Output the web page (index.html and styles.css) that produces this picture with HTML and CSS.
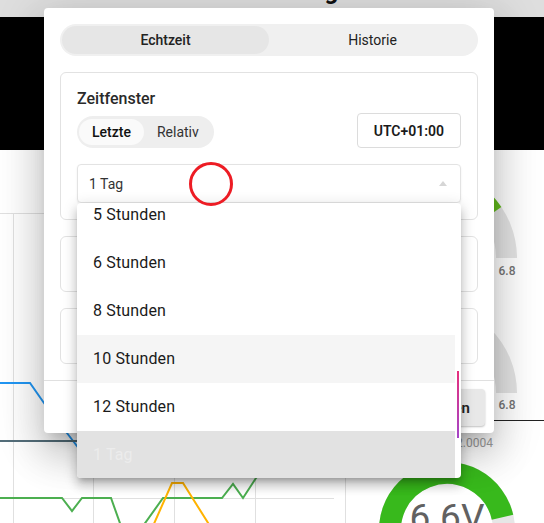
FILE: index.html
```html
<!DOCTYPE html>
<html lang="de">

<head>
  <meta charset="UTF-8">
  <meta name="viewport" content="width=device-width, initial-scale=1.0">
  <title>Zeitfenster</title>
  <link rel="stylesheet" href="styles.css">
</head>

<body>
  <header class="page-head">
    <h1 class="page-title">Messung</h1>
  </header>
  <div class="banner"></div>

  <main class="dashboard">
    <svg class="chart" width="345" height="373" viewBox="0 0 345 373">
      <g class="grid">
        <line x1="0" y1="63.5" x2="334" y2="63.5" />
        <line x1="0" y1="348.5" x2="334" y2="348.5" />
        <line x1="13.5" y1="63" x2="13.5" y2="373" />
        <line x1="93.5" y1="63" x2="93.5" y2="373" />
        <line x1="174.5" y1="63" x2="174.5" y2="373" />
        <line x1="255.5" y1="63" x2="255.5" y2="373" />
      </g>
      <polyline class="series blue" points="0,233 30,233 44,253 80,300" />
      <polyline class="series slate" points="0,291 140,291" />
      <polyline class="series green" points="0,348 62,348 72,361 82,348 111,348 121,376" />
      <polyline class="series green" points="143,376 163,348 222,348 233,334 243,348 256,328 290,290" />
      <polyline class="series orange" points="153,376 172,333 183,333 210,376" />
    </svg>

    <svg class="gauges" width="199" height="373" viewBox="0 0 199 373">
      <path class="gauge-track" d="M-10 108 A91 91 0 0 1 172 108 L151 108 A70 70 0 0 0 11 108Z" />
      <path class="gauge-value" d="M-10 108 A91 91 0 0 1 156.4 57.1 L139 68.9 A70 70 0 0 0 11 108Z" />
      <text class="gauge-label" x="162" y="125">6.8</text>

      <path class="gauge-track" d="M-10 243 A91 91 0 0 1 172 243 L151 243 A70 70 0 0 0 11 243Z" />
      <path class="gauge-value" d="M-10 243 A91 91 0 0 1 65.2 153.4 L68.8 174.1 A70 70 0 0 0 11 243Z" />
      <text class="gauge-label" x="162" y="259">6.8</text>

      <line class="axis" x1="0" y1="270.5" x2="199" y2="270.5" />
      <text class="gauge-small" x="148" y="297">2.0004</text>
      <line class="card-edge" x1="0.5" y1="290" x2="0.5" y2="373" />

      <circle class="donut-track" cx="102" cy="380" r="57" />
      <path class="donut-value" d="M52.6 408.5 A57 57 0 1 1 157.5 367.2" />
      <text class="donut-text" x="102" y="380">6.6V</text>
    </svg>
  </main>

  <div class="dialog">
    <div class="dialog-body">
      <div class="tabs">
        <button class="tab is-active">Echtzeit</button>
        <button class="tab">Historie</button>
      </div>

      <section class="card">
        <div class="card-head">
          <div>
            <h2 class="card-title">Zeitfenster</h2>
            <div class="toggle">
              <button class="toggle-btn is-active">Letzte</button>
              <button class="toggle-btn">Relativ</button>
            </div>
          </div>
          <button class="tz-btn">UTC+01:00</button>
        </div>

        <div class="select">
          <span class="select-value">1 Tag</span>
          <span class="select-arrow"></span>

          <div class="menu">
            <ul class="menu-list">
              <li>5 Stunden</li>
              <li>6 Stunden</li>
              <li>8 Stunden</li>
              <li class="is-hover">10 Stunden</li>
              <li>12 Stunden</li>
              <li class="is-selected">1 Tag</li>
            </ul>
            <div class="menu-scroll"><span class="menu-thumb"></span></div>
          </div>
        </div>
      </section>

      <section class="card card-small"></section>
      <section class="card card-small"></section>
    </div>

    <footer class="dialog-actions">
      <button class="btn">Übernehmen</button>
    </footer>
  </div>

  <span class="click-ring"></span>
</body>

</html>
```

FILE: styles.css
```css
html {
  box-sizing: border-box;
  font-family: Roboto, "Liberation Sans", sans-serif;
  font-size: 16px;
}

*,
*:before,
*:after {
  box-sizing: inherit;
}

body {
  margin: 0;
  width: 544px;
  height: 523px;
  overflow: hidden;
  position: relative;
  background: #fff;
  color: #222;
}

button {
  font: inherit;
  color: inherit;
  border: 0;
  background: none;
  cursor: pointer;
}

/* page behind the dialog */
.page-head {
  height: 17px;
  overflow: hidden;
  padding-left: 239px;
  background: #dedede;
}

.page-title {
  margin: -21px 0 0;
  font-size: 24px;
  line-height: 24px;
  font-weight: bold;
  color: #111;
}

.banner {
  height: 133px;
  background: #000;
}

.dashboard {
  display: flex;
  height: 373px;
}

.chart .grid line {
  stroke: #e0e0e0;
  stroke-width: 1;
}

.series {
  fill: none;
  stroke-width: 2;
  stroke-linejoin: miter;
}

.series.blue {
  stroke: #2196f3;
}

.series.slate {
  stroke: #546e7a;
}

.series.green {
  stroke: #4caf50;
}

.series.orange {
  stroke: #ffb300;
}

.gauge-track {
  fill: #e4e4e4;
}

.gauge-value {
  fill: #64bd1e;
}

.gauge-label {
  font-size: 12px;
  font-weight: 500;
  fill: #757575;
  text-anchor: middle;
}

.gauge-small {
  font-size: 12px;
  fill: #9e9e9e;
  text-anchor: end;
}

.axis {
  stroke: #222;
  stroke-width: 1;
}

.card-edge {
  stroke: #e0e0e0;
}

.donut-track {
  fill: none;
  stroke: #e6e6e6;
  stroke-width: 22;
}

.donut-value {
  fill: none;
  stroke: #38b91c;
  stroke-width: 22;
}

.donut-text {
  font-size: 37px;
  fill: #616161;
  text-anchor: middle;
}

/* dialog */
.dialog {
  position: absolute;
  left: 44px;
  top: 8px;
  width: 450px;
  background: #fff;
  border-radius: 4px;
  z-index: 10;
  box-shadow: 0 11px 15px -7px rgba(0, 0, 0, 0.2),
    0 24px 38px 3px rgba(0, 0, 0, 0.14),
    0 9px 46px 8px rgba(0, 0, 0, 0.12);
}

.dialog-body {
  display: flex;
  flex-direction: column;
  gap: 16px;
  padding: 16px;
}

.tabs {
  display: grid;
  grid-template-columns: 1fr 1fr;
  height: 32px;
  padding: 2px;
  border-radius: 16px;
  background: #f0f0f0;
}

.tab {
  border-radius: 14px;
  font-size: 14px;
  color: #222;
}

.tab.is-active {
  background: #e6e6e6;
  font-weight: 500;
}

.card {
  border: 1px solid #e2e2e2;
  border-radius: 6px;
  padding: 16px;
}

.card-small {
  height: 56px;
}

.card-head {
  display: flex;
  justify-content: space-between;
  align-items: flex-end;
}

.card-title {
  margin: 0 0 8px;
  font-size: 16px;
  line-height: 19px;
  font-weight: 500;
  color: #2a2a2a;
}

.toggle {
  display: inline-flex;
  padding: 3px 2px;
  border-radius: 16px;
  background: #eeeeee;
}

.toggle-btn {
  height: 26px;
  padding: 0 13px;
  border-radius: 13px;
  font-size: 14px;
  color: #333;
}

.toggle-btn.is-active {
  background: #fafafa;
  font-weight: 500;
  color: #111;
}

.tz-btn {
  height: 35px;
  padding: 0 16px;
  border: 1px solid #dcdcdc;
  border-radius: 4px;
  background: #fff;
  font-size: 14px;
  font-weight: 600;
  color: #1a1a1a;
}

.select {
  position: relative;
  display: flex;
  align-items: center;
  justify-content: space-between;
  height: 39px;
  margin-top: 16px;
  padding: 0 13px 0 11px;
  border: 1px solid #e3e3e3;
  border-radius: 4px;
  box-shadow: 0 1px 2px rgba(0, 0, 0, 0.08);
  font-size: 14px;
  color: #333;
}

.select-arrow {
  width: 0;
  height: 0;
  border-left: 4.5px solid transparent;
  border-right: 4.5px solid transparent;
  border-bottom: 5px solid #d6d6d6;
}

.menu {
  position: absolute;
  left: -1px;
  top: 38px;
  width: 384px;
  height: 275px;
  display: flex;
  overflow: hidden;
  background: #fff;
  border-radius: 4px;
  box-shadow: 0 5px 5px -3px rgba(0, 0, 0, 0.2),
    0 8px 10px 1px rgba(0, 0, 0, 0.14),
    0 3px 14px 2px rgba(0, 0, 0, 0.12);
}

.menu-list {
  flex: 1;
  margin: -12px 0 0;
  padding: 0;
  list-style: none;
}

.menu-list li {
  height: 48px;
  line-height: 48px;
  padding: 0 16px;
  font-size: 16px;
  letter-spacing: 0.15px;
  color: #1a1a1a;
}

.menu-list li.is-hover {
  background: #f5f5f5;
}

.menu-list li.is-selected {
  background: #e2e2e2;
  color: #ececec;
}

.menu-scroll {
  width: 6px;
  position: relative;
}

.menu-thumb {
  position: absolute;
  left: 2px;
  top: 168px;
  width: 2px;
  height: 67px;
  background: linear-gradient(#e62f7c, #a446c8);
}

.dialog-actions {
  display: flex;
  justify-content: flex-end;
  padding: 8px 9px 7px;
  border-top: 1px solid #e0e0e0;
}

.btn {
  height: 37px;
  padding: 0 15px;
  border-radius: 4px;
  background: #e8e8e8;
  font-size: 15px;
  font-weight: 600;
  color: #222;
  box-shadow: 0 1px 2px rgba(0, 0, 0, 0.25);
}

/* click marker */
.click-ring {
  position: absolute;
  left: 189px;
  top: 162px;
  width: 44px;
  height: 44px;
  border: 3.5px solid #ed1c24;
  border-radius: 50%;
  z-index: 20;
}
```
